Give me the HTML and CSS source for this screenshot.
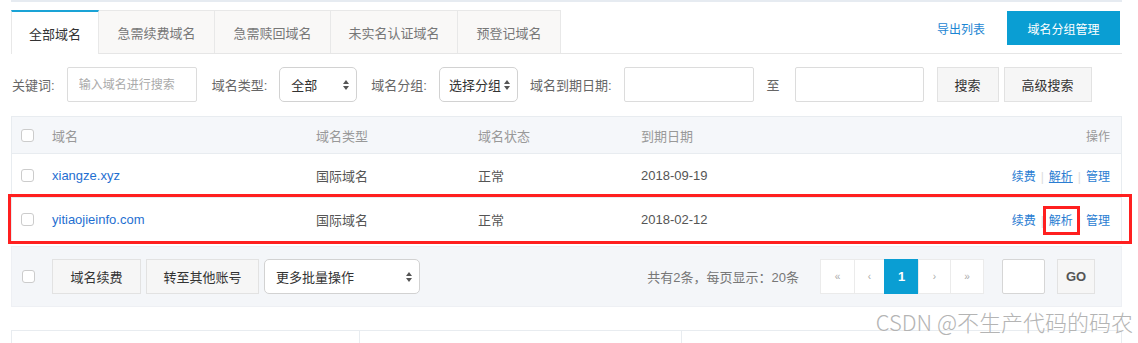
FILE: index.html
```html
<!DOCTYPE html>
<html lang="zh-CN">

<head>
  <meta charset="UTF-8">
  <meta name="viewport" content="width=device-width, initial-scale=1.0">
  <title>域名列表</title>
  <link rel="stylesheet" href="styles.css">
</head>

<body>
  <div class="page">
    <div class="topline"></div>

    <div class="tabbar">
      <ul class="tabs">
        <li class="tab active" style="width: 88px">全部域名</li>
        <li class="tab" style="width: 116px">急需续费域名</li>
        <li class="tab" style="width: 116px">急需赎回域名</li>
        <li class="tab" style="width: 127px">未实名认证域名</li>
        <li class="tab" style="width: 103px">预登记域名</li>
      </ul>
      <div class="tab-actions">
        <a class="export" href="#">导出列表</a>
        <button class="btn-primary">域名分组管理</button>
      </div>
    </div>

    <div class="filters">
      <label>关键词:</label>
      <input class="field kw" type="text" placeholder="输入域名进行搜索">
      <label>域名类型:</label>
      <div class="select sel-type">全部
        <svg width="6" height="10" viewBox="0 0 6 10"><path d="M3 0L6 4H0Z M3 10L0 6H6Z" fill="#555" /></svg>
      </div>
      <label>域名分组:</label>
      <div class="select sel-group">选择分组
        <svg width="6" height="10" viewBox="0 0 6 10"><path d="M3 0L6 4H0Z M3 10L0 6H6Z" fill="#555" /></svg>
      </div>
      <label>域名到期日期:</label>
      <input class="field date" type="text">
      <span class="to">至</span>
      <input class="field date2" type="text">
      <button class="btn search">搜索</button>
      <button class="btn adv">高级搜索</button>
    </div>

    <div class="table">
      <div class="row head">
        <div class="cell check"><span class="box"></span></div>
        <div class="cell">域名</div>
        <div class="cell">域名类型</div>
        <div class="cell">域名状态</div>
        <div class="cell">到期日期</div>
        <div class="cell ops">操作</div>
      </div>
      <div class="row">
        <div class="cell check"><span class="box"></span></div>
        <div class="cell"><a class="domain" href="#">xiangze.xyz</a></div>
        <div class="cell">国际域名</div>
        <div class="cell">正常</div>
        <div class="cell">2018-09-19</div>
        <div class="cell ops">
          <a href="#">续费</a><span class="sep">|</span><a class="hover" href="#">解析</a><span class="sep">|</span><a href="#">管理</a>
        </div>
      </div>
      <div class="row marked">
        <div class="cell check"><span class="box"></span></div>
        <div class="cell"><a class="domain" href="#">yitiaojieinfo.com</a></div>
        <div class="cell">国际域名</div>
        <div class="cell">正常</div>
        <div class="cell">2018-02-12</div>
        <div class="cell ops">
          <a href="#">续费</a><span class="sep">|</span><a class="boxed" href="#">解析</a><span class="sep">|</span><a href="#">管理</a>
        </div>
      </div>
    </div>

    <div class="batch">
      <span class="box"></span>
      <button class="btn renew">域名续费</button>
      <button class="btn move">转至其他账号</button>
      <div class="select sel-more">更多批量操作
        <svg width="6" height="10" viewBox="0 0 6 10"><path d="M3 0L6 4H0Z M3 10L0 6H6Z" fill="#555" /></svg>
      </div>
      <span class="total">共有2条，每页显示：20条</span>
      <ul class="pager">
        <li style="width: 35px">«</li>
        <li style="width: 31px">‹</li>
        <li class="current" style="width: 35px">1</li>
        <li style="width: 33px">›</li>
        <li style="width: 34px">»</li>
      </ul>
      <input class="field jump" type="text">
      <button class="btn go">GO</button>
    </div>

    <div class="bottom-box">
      <div></div>
      <div></div>
      <div></div>
    </div>

    <div class="watermark">CSDN @不生产代码的码农</div>
  </div>
</body>

</html>
```

FILE: styles.css
```css
body {
  margin: 0;
  background: #fff;
  font-family: 'Liberation Sans', 'Noto Sans CJK SC', sans-serif;
  font-size: 13px;
  color: #555;
  overflow: hidden;
}

.page {
  position: relative;
  width: 1111px;
  height: 343px;
  padding-left: 11px;
}

a {
  text-decoration: none;
}

.topline {
  height: 2px;
  background: #e6ebf1;
}

/* tabs */
.tabbar {
  display: flex;
  justify-content: space-between;
  margin-top: 8px;
  border-bottom: 1px solid #e6e6e6;
}

.tabs {
  display: flex;
  margin: 0;
  padding: 0;
  list-style: none;
}

.tab {
  height: 43px;
  box-sizing: border-box;
  display: flex;
  align-items: center;
  justify-content: center;
  background: #f9f8f7;
  border-top: 1px solid #e8e8e8;
  border-right: 1px solid #e8e8e8;
  color: #777;
}

.tab.active {
  background: #fff;
  border-top: 2px solid #1aa3d6;
  border-left: 1px solid #e8e8e8;
  color: #333;
  margin-bottom: -1px;
  height: 44px;
}

.tab-actions {
  display: flex;
  align-items: flex-start;
  gap: 22px;
  padding-right: 2px;
}

.export {
  color: #1c86d3;
  font-size: 12px;
  margin-top: 10px;
}

.btn-primary {
  margin-top: 1px;
  width: 113px;
  height: 34px;
  border: none;
  background: #0a9ed3;
  color: #fff;
  font-family: inherit;
  font-size: 12px;
}

/* filters */
.filters {
  display: flex;
  align-items: center;
  margin-top: 13px;
  height: 35px;
}

.filters label {
  color: #666;
  margin-right: 12px;
  padding-left: 1px;
}

.field {
  box-sizing: border-box;
  height: 35px;
  border: 1px solid #dcdcdc;
  border-radius: 2px;
  padding: 0 11px;
  font-family: inherit;
  font-size: 12px;
  margin-right: 13px;
}

.field::placeholder {
  color: #aaa;
}

.kw {
  width: 130px;
  margin-right: 14px;
}

.date {
  width: 130px;
}

.date2 {
  width: 129px;
}

.to {
  margin-right: 15px;
  color: #666;
}

.select {
  box-sizing: border-box;
  height: 35px;
  display: flex;
  align-items: center;
  justify-content: space-between;
  padding: 0 7px 0 11px;
  border: 1px solid #d2d2d2;
  border-radius: 5px;
  background: #fff;
  color: #333;
  margin-right: 13px;
}

.sel-type {
  width: 78px;
}

.sel-group {
  width: 79px;
  padding-left: 9px;
  margin-right: 11px;
}

.btn {
  box-sizing: border-box;
  height: 35px;
  border: 1px solid #e2e2e2;
  background: #f6f6f6;
  color: #333;
  font-family: inherit;
  font-size: 13px;
  padding: 0;
}

.search {
  width: 62px;
  margin-right: 5px;
}

.adv {
  width: 88px;
}

/* table */
.table {
  margin-top: 14px;
  border: 1px solid #e8ecf0;
  border-top: none;
}

.row {
  display: grid;
  grid-template-columns: 40px 264px 162px 163px 1fr auto;
  align-items: center;
  box-sizing: border-box;
  height: 44px;
  border-top: 1px solid #e8ecf0;
  position: relative;
}

.row.head {
  height: 37px;
  background: #f5f7fa;
  color: #999;
}

.cell.check {
  padding-left: 9px;
  display: flex;
}

.box {
  display: inline-block;
  width: 11px;
  height: 11px;
  border: 1px solid #ccc;
  border-radius: 3px;
  background: #fff;
}

.cell.ops {
  padding-right: 11px;
  font-size: 12px;
  text-align: right;
}

.ops a {
  color: #2a7dd2;
  position: relative;
}

.ops .hover {
  text-decoration: underline;
}

.sep {
  color: #ddd;
  margin: 0 5px;
}

.domain {
  color: #1f6fd1;
}

.row.marked::after {
  content: '';
  position: absolute;
  left: -4px;
  right: -11px;
  top: -4px;
  bottom: -3px;
  border: 3px solid #ff1f1f;
}

.boxed::after {
  content: '';
  position: absolute;
  left: -6px;
  right: -7px;
  top: -8px;
  bottom: -7px;
  border: 3px solid #ff1f1f;
}

/* batch bar */
.batch {
  display: flex;
  align-items: center;
  margin-top: 4px;
  height: 61px;
  padding-left: 10px;
  background: #f4f6f9;
  border: 1px solid #eef0f4;
  box-sizing: border-box;
}

.batch .box {
  margin-right: 17px;
}

.renew {
  width: 89px;
  margin-right: 5px;
}

.move {
  width: 113px;
  margin-right: 5px;
}

.sel-more {
  width: 156px;
  margin-right: auto;
}

.total {
  color: #777;
  font-size: 13px;
  margin-right: 22px;
}

.pager {
  display: flex;
  margin: 0 18px 0 0;
  padding: 0;
  list-style: none;
}

.pager li {
  height: 35px;
  box-sizing: border-box;
  display: flex;
  align-items: center;
  justify-content: center;
  background: #fff;
  border: 1px solid #ebebeb;
  margin-left: -1px;
  color: #aaa;
  font-size: 10px;
}

.pager li.current {
  background: #0a9ed3;
  border-color: #0a9ed3;
  color: #fff;
  font-weight: bold;
  font-size: 13px;
}

.jump {
  width: 43px;
  margin-right: 12px;
  border-color: #d6d6d6;
}

.go {
  width: 38px;
  margin-right: 26px;
  font-weight: bold;
  color: #555;
}

/* lower panel */
.bottom-box {
  display: grid;
  grid-template-columns: 348px 322px 1fr;
  margin-top: 23px;
  height: 13px;
  border-top: 1px solid #e8ecf0;
}

.bottom-box div {
  border-left: 1px solid #e8ecf0;
}

.bottom-box div:last-child {
  border-right: 1px solid #e8ecf0;
}

.watermark {
  position: absolute;
  right: -11px;
  top: 305px;
  font-family: 'Noto Sans CJK SC', sans-serif;
  font-size: 22px;
  font-weight: 300;
  color: #b4b4b4;
  text-shadow: 0 0 1px #fff;
}
```
